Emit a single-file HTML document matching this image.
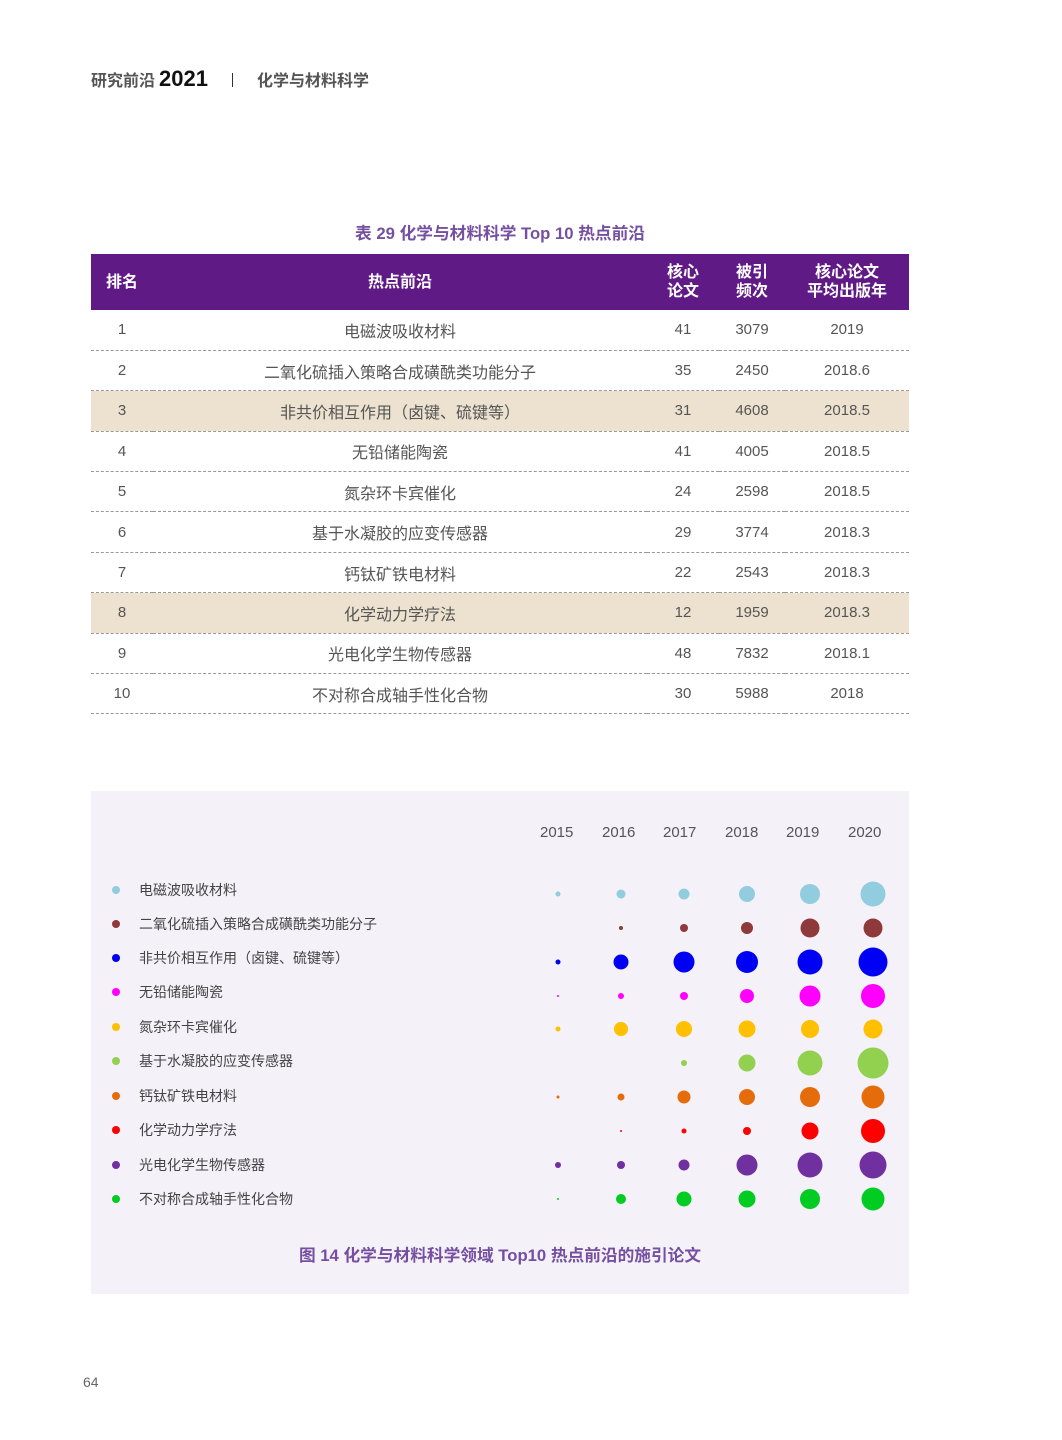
<!DOCTYPE html>
<html><head><meta charset="utf-8"><style>
*{margin:0;padding:0;box-sizing:border-box}
body{width:1062px;height:1440px;background:#fff;position:relative;font-family:"Liberation Sans","Noto Sans CJK SC",sans-serif;overflow:hidden}
.abs{position:absolute}
.hdr{top:66px;left:91px;font-size:16px;font-weight:bold;color:#555;white-space:nowrap}
.hdr b{color:#111;font-size:22px;margin-left:4px}
.cap{color:#7650a0;font-size:16.7px;text-align:center;width:818px;left:91px;font-weight:bold}
table{position:absolute;left:91px;top:254px;width:818px;border-collapse:collapse;font-size:15px;color:#555;table-layout:fixed}
th{background:#5f1a86;color:#fff;font-weight:bold;height:56px;line-height:19px;font-size:16px}
td{height:40.4px;text-align:center;border-bottom:1px dashed #999}
td:nth-child(2){font-size:16px}
tr.b td{background:#ece2cf}
.leg{left:112px;font-size:14px;color:#444;white-space:nowrap}
.leg i{display:inline-block;width:8px;height:8px;border-radius:50%;margin-right:19px;vertical-align:1px}
</style></head><body>
<div class="abs hdr">研究前沿<b>2021</b><span style="display:inline-block;width:1px;height:14px;background:#333;margin:0 24px 0 24px;vertical-align:-1px"></span>化学与材料科学</div>
<div class="abs cap" style="top:220px">表 29 化学与材料科学 Top 10 热点前沿</div>
<table>
<colgroup><col style="width:62px"><col style="width:494px"><col style="width:72px"><col style="width:66px"><col style="width:124px"></colgroup>
<tr><th>排名</th><th>热点前沿</th><th>核心<br>论文</th><th>被引<br>频次</th><th>核心论文<br>平均出版年</th></tr>
<tr><td>1</td><td>电磁波吸收材料</td><td>41</td><td>3079</td><td>2019</td></tr>
<tr><td>2</td><td>二氧化硫插入策略合成磺酰类功能分子</td><td>35</td><td>2450</td><td>2018.6</td></tr>
<tr class="b"><td>3</td><td>非共价相互作用（卤键、硫键等）</td><td>31</td><td>4608</td><td>2018.5</td></tr>
<tr><td>4</td><td>无铅储能陶瓷</td><td>41</td><td>4005</td><td>2018.5</td></tr>
<tr><td>5</td><td>氮杂环卡宾催化</td><td>24</td><td>2598</td><td>2018.5</td></tr>
<tr><td>6</td><td>基于水凝胶的应变传感器</td><td>29</td><td>3774</td><td>2018.3</td></tr>
<tr><td>7</td><td>钙钛矿铁电材料</td><td>22</td><td>2543</td><td>2018.3</td></tr>
<tr class="b"><td>8</td><td>化学动力学疗法</td><td>12</td><td>1959</td><td>2018.3</td></tr>
<tr><td>9</td><td>光电化学生物传感器</td><td>48</td><td>7832</td><td>2018.1</td></tr>
<tr><td>10</td><td>不对称合成轴手性化合物</td><td>30</td><td>5988</td><td>2018</td></tr>
</table>
<div class="abs" style="left:91px;top:791px;width:818px;height:503px;background:#f4f1f8"></div>
<div class="abs" style="top:824px;left:0;font-size:15px;color:#555">
<span class="abs" style="left:540px">2015</span><span class="abs" style="left:602px">2016</span><span class="abs" style="left:663px">2017</span><span class="abs" style="left:725px">2018</span><span class="abs" style="left:786px">2019</span><span class="abs" style="left:848px">2020</span></div>
<div class="abs leg" style="top:880px"><i style="background:#92cddf"></i>电磁波吸收材料</div>
<div class="abs leg" style="top:914px"><i style="background:#8e3a3a"></i>二氧化硫插入策略合成磺酰类功能分子</div>
<div class="abs leg" style="top:948px"><i style="background:#0000f5"></i>非共价相互作用（卤键、硫键等）</div>
<div class="abs leg" style="top:982px"><i style="background:#ff00ff"></i>无铅储能陶瓷</div>
<div class="abs leg" style="top:1017px"><i style="background:#ffc000"></i>氮杂环卡宾催化</div>
<div class="abs leg" style="top:1051px"><i style="background:#92d050"></i>基于水凝胶的应变传感器</div>
<div class="abs leg" style="top:1086px"><i style="background:#e46c0a"></i>钙钛矿铁电材料</div>
<div class="abs leg" style="top:1120px"><i style="background:#ff0000"></i>化学动力学疗法</div>
<div class="abs leg" style="top:1155px"><i style="background:#7030a0"></i>光电化学生物传感器</div>
<div class="abs leg" style="top:1189px"><i style="background:#00cc22"></i>不对称合成轴手性化合物</div>
<svg class="abs" style="left:0;top:0" width="1062" height="1440">
<g fill="#92cddf"><circle cx="558" cy="894" r="2.5"/><circle cx="621" cy="894" r="4.5"/><circle cx="684" cy="894" r="5.5"/><circle cx="747" cy="894" r="8"/><circle cx="810" cy="894" r="10"/><circle cx="873" cy="894" r="12.5"/></g>
<g fill="#8e3a3a"><circle cx="621" cy="928" r="2"/><circle cx="684" cy="928" r="4"/><circle cx="747" cy="928" r="6"/><circle cx="810" cy="928" r="9.5"/><circle cx="873" cy="928" r="9.5"/></g>
<g fill="#0000f5"><circle cx="558" cy="962" r="2.5"/><circle cx="621" cy="962" r="7.5"/><circle cx="684" cy="962" r="10.5"/><circle cx="747" cy="962" r="11"/><circle cx="810" cy="962" r="12.5"/><circle cx="873" cy="962" r="14.5"/></g>
<g fill="#ff00ff"><circle cx="558" cy="996" r="1"/><circle cx="621" cy="996" r="3"/><circle cx="684" cy="996" r="4"/><circle cx="747" cy="996" r="7"/><circle cx="810" cy="996" r="10.5"/><circle cx="873" cy="996" r="12"/></g>
<g fill="#ffc000"><circle cx="558" cy="1029" r="2.5"/><circle cx="621" cy="1029" r="7"/><circle cx="684" cy="1029" r="8"/><circle cx="747" cy="1029" r="8.5"/><circle cx="810" cy="1029" r="9"/><circle cx="873" cy="1029" r="9.5"/></g>
<g fill="#92d050"><circle cx="684" cy="1063" r="3"/><circle cx="747" cy="1063" r="8.5"/><circle cx="810" cy="1063" r="12.5"/><circle cx="873" cy="1063" r="15.5"/></g>
<g fill="#e46c0a"><circle cx="558" cy="1097" r="1.5"/><circle cx="621" cy="1097" r="3.5"/><circle cx="684" cy="1097" r="6.5"/><circle cx="747" cy="1097" r="8"/><circle cx="810" cy="1097" r="10"/><circle cx="873" cy="1097" r="11.5"/></g>
<g fill="#ff0000"><circle cx="621" cy="1131" r="1"/><circle cx="684" cy="1131" r="2.5"/><circle cx="747" cy="1131" r="4"/><circle cx="810" cy="1131" r="8.5"/><circle cx="873" cy="1131" r="12"/></g>
<g fill="#7030a0"><circle cx="558" cy="1165" r="3"/><circle cx="621" cy="1165" r="4"/><circle cx="684" cy="1165" r="5.5"/><circle cx="747" cy="1165" r="10.5"/><circle cx="810" cy="1165" r="12.5"/><circle cx="873" cy="1165" r="13.5"/></g>
<g fill="#00cc22"><circle cx="558" cy="1199" r="1"/><circle cx="621" cy="1199" r="5"/><circle cx="684" cy="1199" r="7.5"/><circle cx="747" cy="1199" r="8.5"/><circle cx="810" cy="1199" r="10"/><circle cx="873" cy="1199" r="11.5"/></g>
</svg>
<div class="abs cap" style="top:1242px">图 14 化学与材料科学领域 Top10 热点前沿的施引论文</div>
<div class="abs" style="left:83px;top:1374px;font-size:14px;color:#666">64</div>
</body></html>
